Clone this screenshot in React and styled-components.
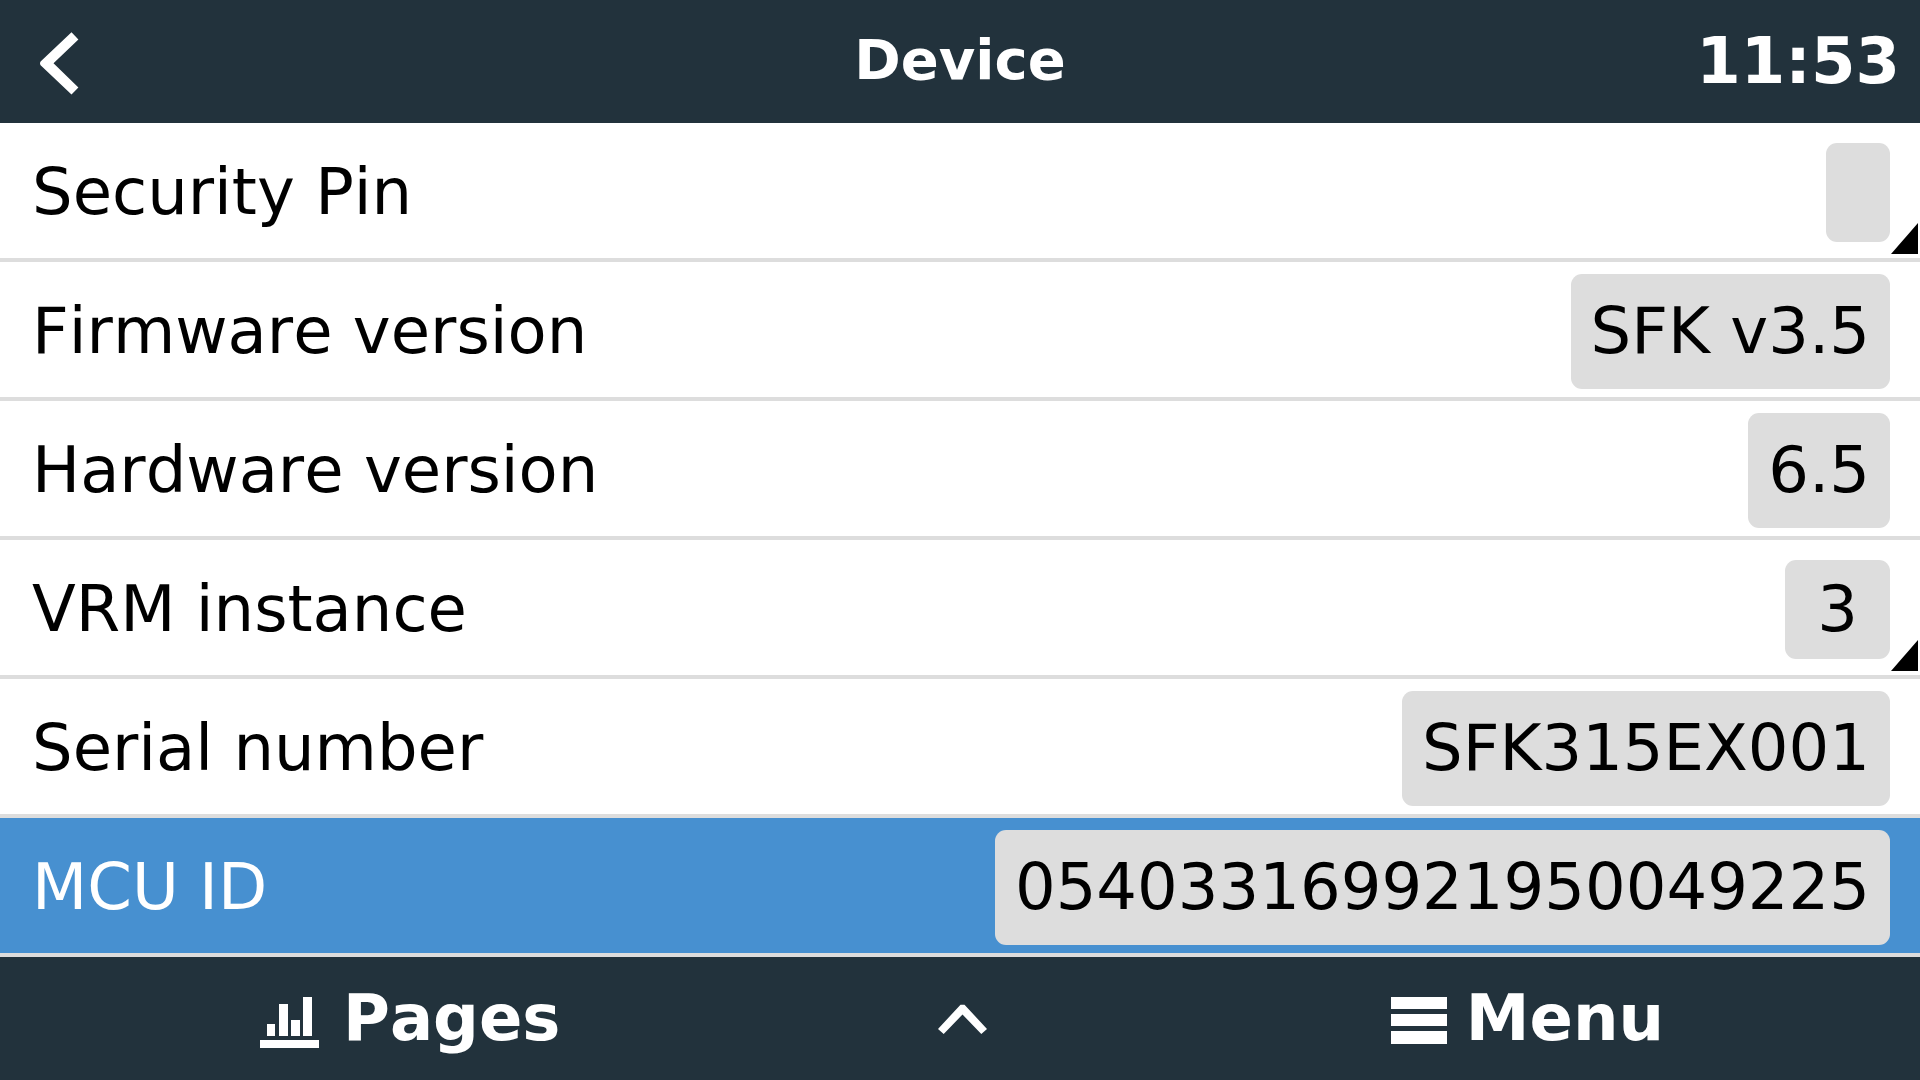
import React from 'react';
import styled, { createGlobalStyle } from 'styled-components';

const colors = {
  bar: '#22323c',
  line: '#dddddd',
  active: '#4790d0',
};

const GlobalStyle = createGlobalStyle`
  * {
    box-sizing: border-box;
  }

  body {
    margin: 0;
    background: #fff;
    color: #000;
    font-family: 'DejaVu Sans', sans-serif;
    font-kerning: none;
  }
`;

const StyledPage = styled.div`
  display: flex;
  flex-direction: column;
  min-height: 100vh;
`;

const StyledHeader = styled.header`
  display: grid;
  grid-template-columns: 1fr auto 1fr;
  align-items: center;
  min-height: 123px;
  padding: 0 20px;
  background: ${colors.bar};
  color: #fff;
`;

const StyledBarButton = styled.button`
  display: flex;
  align-items: center;
  justify-self: ${props => props.$side || 'center'};
  gap: ${props => props.$gap || 0}px;
  padding: 0;
  border: 0;
  background: none;
  color: inherit;
  font: inherit;
  cursor: pointer;

  svg {
    display: block;
    fill: currentColor;
  }
`;

const StyledBackButton = styled(StyledBarButton)`
  padding: 0 20px;
`;

const StyledTitle = styled.h1`
  margin: 0;
  padding-bottom: 4px;
  font-size: 56px;
  line-height: 66px;
`;

const StyledClock = styled.time`
  justify-self: end;
  font-size: 64px;
  font-weight: bold;
  line-height: 75px;
`;

const StyledList = styled.ul`
  flex: 1;
  margin: 0;
  padding: 0;
  list-style: none;
`;

const StyledRow = styled.li`
  position: relative;
  display: flex;
  align-items: center;
  justify-content: space-between;
  min-height: 139px;
  padding: 12px 30px 8px 32px;
  border-bottom: 4px solid ${colors.line};
  background: ${props => (props.$active ? colors.active : '#fff')};
  color: ${props => (props.$active ? '#fff' : '#000')};
  font-size: 64px;
  line-height: 75px;
`;

const StyledValue = styled.span`
  padding: 20px;
  border-radius: 11px;
  background: ${colors.line};
  color: #000;
`;

const StyledEditValue = styled.button`
  min-height: 99px;
  padding: 12px 32px;
  border: 0;
  border-radius: 11px;
  background: ${colors.line};
  color: #000;
  font: inherit;
  font-kerning: none;
  cursor: pointer;
`;

const StyledCorner = styled.span`
  position: absolute;
  right: 2px;
  bottom: 4px;
  width: 27px;
  height: 31px;
  background: #000;
  clip-path: polygon(100% 0, 100% 100%, 0 100%);
`;

const StyledFooter = styled.footer`
  display: grid;
  grid-template-columns: 1fr auto 1fr;
  align-items: center;
  min-height: 123px;
  padding: 0 256px 0 260px;
  background: ${colors.bar};
  color: #fff;
  font-size: 64px;
  font-weight: bold;
  line-height: 75px;
`;

const rows = [
  { label: 'Security Pin', value: '', editable: true },
  { label: 'Firmware version', value: 'SFK v3.5' },
  { label: 'Hardware version', value: '6.5' },
  { label: 'VRM instance', value: '3', editable: true },
  { label: 'Serial number', value: 'SFK315EX001' },
  { label: 'MCU ID', value: '054033169921950049225', active: true },
];

function BackIcon() {
  return (
    <svg width="39" height="67" viewBox="0 0 39 67" aria-hidden="true">
      <path d="M31.5 4.3L38.4 11.5L13.5 35.3L38.4 59.5L31.5 66.5L0.6 37.2Q-0.6 35.3 0.6 33.4Z" />
    </svg>
  );
}

function PagesIcon() {
  return (
    <svg width="59" height="59" viewBox="0 0 59 59" aria-hidden="true">
      <path d="M7 35h8v12H7zM19 15h9v32h-9zM31 31h9v16h-9zM43 8h9v39h-9zM0 51h59v8H0z" />
    </svg>
  );
}

function UpIcon() {
  return (
    <svg width="49" height="59" viewBox="0 0 49 59" aria-hidden="true">
      <path d="M22.5 15.7H26.5L49 40L43.3 45L24.5 25.5L5.7 45L0 40Z" />
    </svg>
  );
}

function MenuIcon() {
  return (
    <svg width="56" height="59" viewBox="0 0 56 59" aria-hidden="true">
      <path d="M0 8h56v12H0zM0 25h56v12H0zM0 42h56v13H0z" />
    </svg>
  );
}

function Row({ label, value, editable, active }) {
  return (
    <StyledRow $active={active}>
      <span>{label}</span>
      {editable ? (
        <StyledEditValue type="button" aria-label={`${label} ${value}`}>
          {value}
        </StyledEditValue>
      ) : (
        <StyledValue>{value}</StyledValue>
      )}
      {editable && <StyledCorner />}
    </StyledRow>
  );
}

export default function App() {
  return (
    <StyledPage>
      <GlobalStyle />
      <StyledHeader>
        <StyledBackButton type="button" $side="start" aria-label="Back">
          <BackIcon />
        </StyledBackButton>
        <StyledTitle>Device</StyledTitle>
        <StyledClock>11:53</StyledClock>
      </StyledHeader>
      <StyledList>
        {rows.map(row => <Row key={row.label} {...row} />)}
      </StyledList>
      <StyledFooter>
        <StyledBarButton type="button" $side="start" $gap={24}>
          <PagesIcon />
          Pages
        </StyledBarButton>
        <StyledBarButton type="button" aria-label="Scroll up">
          <UpIcon />
        </StyledBarButton>
        <StyledBarButton type="button" $side="end" $gap={19}>
          <MenuIcon />
          Menu
        </StyledBarButton>
      </StyledFooter>
    </StyledPage>
  );
}
